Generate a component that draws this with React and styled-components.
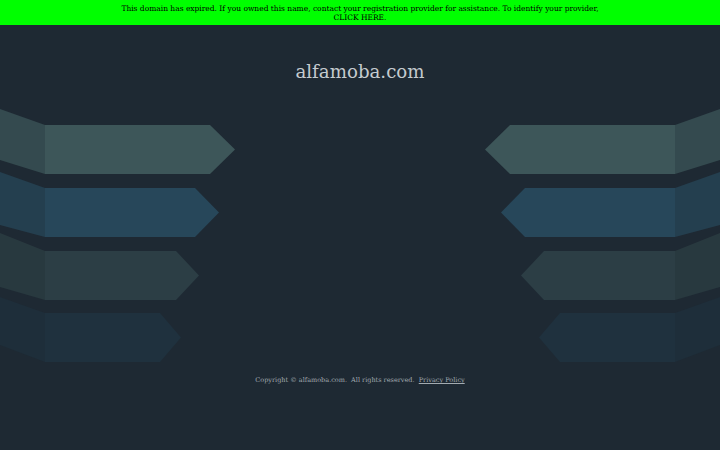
import React from 'react';
import styled, { createGlobalStyle } from 'styled-components';

const GlobalStyle = createGlobalStyle`
  html, body {
    margin: 0;
    padding: 0;
    background: #1e2933;
  }
  body {
    font-family: "DejaVu Serif", serif;
  }
`;

const Page = styled.div`
  width: 720px;
  height: 450px;
  display: flex;
  flex-direction: column;
  background: #1e2933;
  overflow: hidden;
`;

const Banner = styled.div`
  background: #00ff00;
  color: #000;
  font-size: 7.5px;
  line-height: 9px;
  text-align: center;
  padding: 4px 0 3px;
  height: 18px;
`;

const Title = styled.h1`
  margin: 36px 0 0;
  text-align: center;
  font-weight: normal;
  font-size: 18.2px;
  line-height: 22px;
  color: #c5cbcf;
`;

const Graphic = styled.div`
  margin-top: 25px;
  display: flex;
  justify-content: space-between;
`;

const Side = styled.svg`
  display: block;
  transform: ${({ $flip }) => ($flip ? 'scaleX(-1)' : 'none')};
`;

const Footer = styled.div`
  margin-top: 12px;
  text-align: center;
  font-size: 6.5px;
  line-height: 10px;
  color: #a3abb1;
  white-space: pre;

  a {
    color: #a3abb1;
    text-decoration: underline;
  }
`;

const bars = [
  { top: 17, end: 210, tip: 235, lt: 1, lb: 52, main: '#3d5659', left: '#344a4f' },
  { top: 80, end: 195, tip: 219, lt: 64, lb: 117, main: '#27475a', left: '#243f4f' },
  { top: 143, end: 176, tip: 199, lt: 125, lb: 179, main: '#2c3e45', left: '#28393f' },
  { top: 205, end: 160, tip: 181, lt: 189, lb: 237, main: '#1f313e', left: '#1e2e3a' },
];

const Arrows = ({ flip }) => (
  <Side $flip={flip} width="235" height="255" viewBox="0 0 235 255">
    {bars.map((b) => {
      const bottom = b.top + 49;
      const mid = b.top + 24.5;
      return (
        <g key={b.top}>
          <polygon points={`0,${b.lt} 45,${b.top} 45,${bottom} 0,${b.lb}`} fill={b.left} />
          <polygon
            points={`45,${b.top} ${b.end},${b.top} ${b.tip},${mid} ${b.end},${bottom} 45,${bottom}`}
            fill={b.main}
          />
        </g>
      );
    })}
  </Side>
);

export default function App() {
  return (
    <>
      <GlobalStyle />
      <Page>
        <Banner>
          This domain has expired. If you owned this name, contact your registration provider for assistance. To identify your provider,
          <br />
          CLICK HERE.
        </Banner>
        <Title>alfamoba.com</Title>
        <Graphic>
          <Arrows />
          <Arrows flip />
        </Graphic>
        <Footer>
          {'Copyright © alfamoba.com.  All rights reserved.  '}
          <a>Privacy Policy</a>
        </Footer>
      </Page>
    </>
  );
}
